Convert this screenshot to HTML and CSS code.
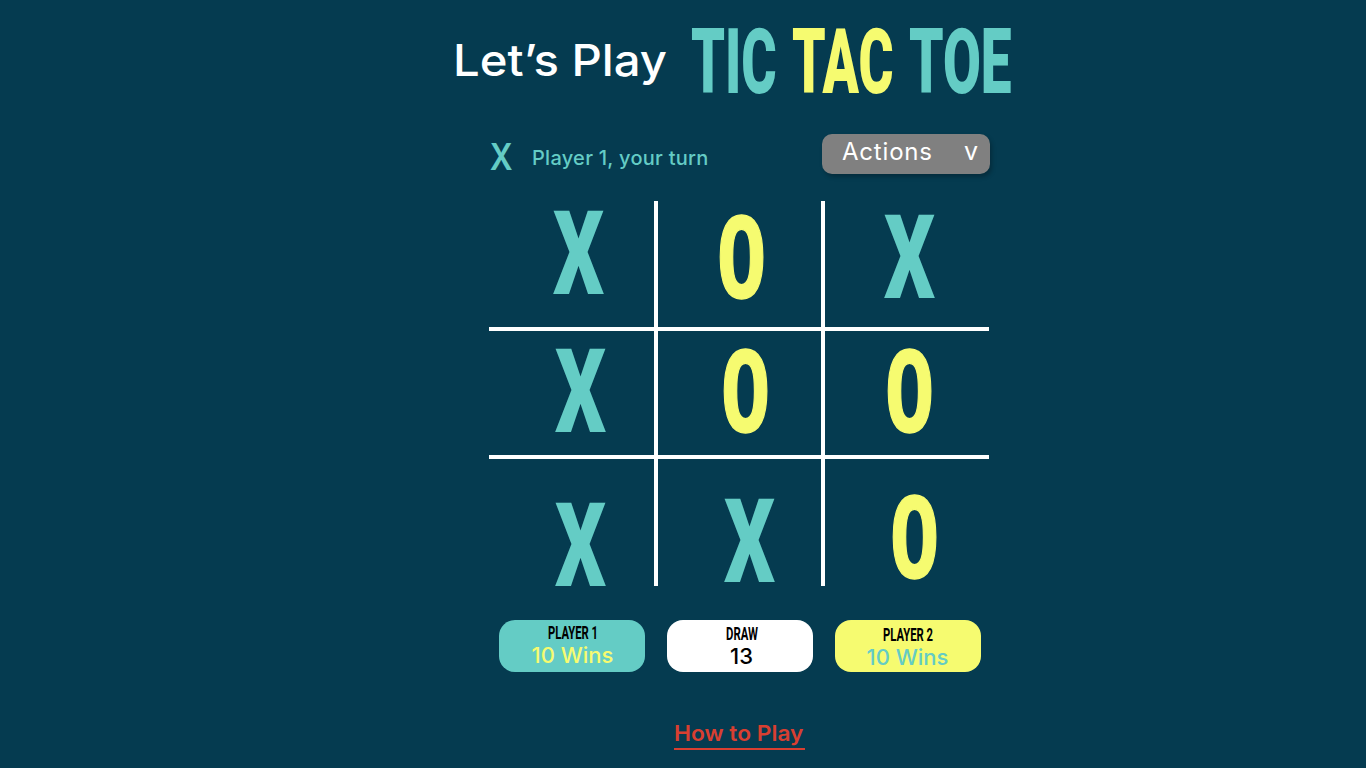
FILE: index.html
```html
<!DOCTYPE html>
<html lang="en">
<head>
<meta charset="utf-8">
<title>Tic Tac Toe</title>
<link rel="stylesheet" href="styles.css">
</head>
<body>
<header class="title">
  <span class="lets">Let’s Play</span>
  <div class="logo">
    <svg class="teal" width="85" height="80"><text transform="translate(0 73) scale(.6 1)" textLength="143" lengthAdjust="spacingAndGlyphs">TIC</text></svg>
    <svg class="yellow" width="101" height="80"><text transform="translate(0 73) scale(.57 1)" textLength="178" lengthAdjust="spacingAndGlyphs">TAC</text></svg>
    <svg class="teal" width="103" height="80"><text transform="translate(0 73) scale(.6 1)" textLength="171" lengthAdjust="spacingAndGlyphs">TOE</text></svg>
  </div>
</header>
<main class="game">
  <div class="status">
    <span class="turn-mark">X</span>
    <span class="turn">Player 1, your turn</span>
    <button class="actions"><span class="actions-label">Actions</span><span class="chev">v</span></button>
  </div>
  <div class="board">
    <div class="cell c1"><svg class="mark x"><text x="0" y="83" textLength="51" lengthAdjust="spacingAndGlyphs">X</text></svg></div>
    <div class="cell c2"><svg class="mark o"><text transform="translate(22.5 83) scale(.75 1)">O</text></svg></div>
    <div class="cell c3"><svg class="mark x"><text x="0" y="83" textLength="51" lengthAdjust="spacingAndGlyphs">X</text></svg></div>
    <div class="cell c4"><svg class="mark x"><text x="0" y="83" textLength="51" lengthAdjust="spacingAndGlyphs">X</text></svg></div>
    <div class="cell c5"><svg class="mark o"><text transform="translate(22.5 83) scale(.75 1)">O</text></svg></div>
    <div class="cell c6"><svg class="mark o"><text transform="translate(22.5 83) scale(.75 1)">O</text></svg></div>
    <div class="cell c7"><svg class="mark x"><text x="0" y="83" textLength="51" lengthAdjust="spacingAndGlyphs">X</text></svg></div>
    <div class="cell c8"><svg class="mark x"><text x="0" y="83" textLength="51" lengthAdjust="spacingAndGlyphs">X</text></svg></div>
    <div class="cell c9"><svg class="mark o"><text transform="translate(22.5 83) scale(.75 1)">O</text></svg></div>
  </div>
  <div class="scores">
    <div class="score p1">
      <svg class="name" width="50" height="16"><text x="0" y="14" textLength="50" lengthAdjust="spacingAndGlyphs">PLAYER 1</text></svg>
      <span class="count">10 Wins</span>
    </div>
    <div class="score draw">
      <svg class="name" width="32" height="16"><text x="0" y="14" textLength="32" lengthAdjust="spacingAndGlyphs">DRAW</text></svg>
      <span class="count">13</span>
    </div>
    <div class="score p2">
      <svg class="name" width="50" height="16"><text x="0" y="14" textLength="50" lengthAdjust="spacingAndGlyphs">PLAYER 2</text></svg>
      <span class="count">10 Wins</span>
    </div>
  </div>
  <a class="how"><span class="how-text">How to Play</span></a>
</main>
</body>
</html>
```
FILE: styles.css
```css
* { box-sizing: border-box; }
body {
  margin: 0;
  height: 768px;
  overflow: hidden;
  background: #053b50;
  font-family: Inter, "Liberation Sans", sans-serif;
}
svg { display: block; overflow: visible; flex: none; }
.title {
  display: flex;
  height: 134px;
  padding: 20px 0 0 453px;
}
.lets {
  width: 238px;
  padding-top: 14px;
  color: #fff;
  font-size: 43.5px;
  font-weight: 500;
  line-height: 52px;
  white-space: nowrap;
  transform: scaleX(1.087);
  transform-origin: left;
}
.logo {
  display: flex;
  gap: 16px;
  font: 900 90px Roboto, "Liberation Sans", sans-serif;
}
.teal { fill: #64ccc5; }
.yellow { fill: #f6fb70; }
.game {
  width: 501px;
  margin-left: 489px;
}
.status {
  display: flex;
  height: 67px;
  color: #64ccc5;
}
.turn-mark {
  width: 43px;
  padding: 2px 0 0 1px;
  font-size: 37px;
  font-weight: 600;
  line-height: 42px;
  transform: scaleX(.86);
  transform-origin: left;
}
.turn {
  width: 290px;
  padding-top: 12px;
  font-size: 20px;
  font-weight: 500;
  letter-spacing: .27px;
  line-height: 24px;
  white-space: nowrap;
}
.actions {
  display: flex;
  flex: none;
  justify-content: space-between;
  width: 168px;
  height: 40px;
  padding: 0 12px 0 20px;
  border: 0;
  border-radius: 10px;
  background: #808080;
  box-shadow: 2px 3px 4px rgba(0, 0, 0, .25);
  color: #fff;
  font-family: inherit;
}
.actions-label { font-size: 24px; letter-spacing: .8px; line-height: 36px; }
.chev { font-size: 25px; line-height: 34px; }
.board {
  display: grid;
  grid-template-columns: 165px 163px 164px;
  grid-template-rows: 126px 124px 127px;
  gap: 4px;
  width: 500px;
  height: 385px;
  background: #fff;
}
.cell { background: #053b50; }
.c1 { padding: 10px 0 0 64px; }
.c2 { padding: 13px 0 0 61px; }
.c3 { padding: 14px 0 0 59px; }
.c4 { padding: 18px 0 0 66px; }
.c5 { padding: 17px 0 0 65px; }
.c6 { padding: 17px 0 0 62px; }
.c7 { padding: 44px 0 0 66px; }
.c8 { padding: 40px 0 0 66px; }
.c9 { padding: 35px 0 0 67px; }
.mark { font: 900 116.7px Roboto, "Liberation Sans", sans-serif; }
.x { width: 51px; height: 83px; fill: #64ccc5; }
.o {
  width: 45px;
  height: 85px;
  font: bold 111px "DejaVu Sans Mono", monospace;
  text-anchor: middle;
  fill: #f6fb70;
  stroke: #f6fb70;
  stroke-width: 1.4px;
}
.scores {
  display: flex;
  gap: 22px;
  padding: 34px 0 0 10px;
}
.score {
  display: flex;
  flex-direction: column;
  align-items: center;
  width: 146px;
  height: 52px;
  border-radius: 16px;
}
.name {
  font: 700 18px Roboto, "Liberation Sans", sans-serif;
  fill: #000;
}
.count { font-size: 22px; font-weight: 500; line-height: 28px; }
.p1 { padding: 5px 0 0 1px; background: #64ccc5; color: #f6fb70; }
.draw { padding: 6px 0 0 3px; background: #fff; color: #000; }
.p2 { padding: 7px 1px 0 0; background: #f6fb70; color: #64ccc5; }
.how {
  display: block;
  width: 131px;
  height: 31px;
  margin: 47px 0 0 185px;
  border-bottom: 2px solid #d83f31;
  color: #d83f31;
  font-size: 22px;
  font-weight: 600;
  line-height: 28px;
  white-space: nowrap;
}
.how-text {
  display: inline-block;
  transform: scaleX(1.035);
  transform-origin: left;
}
```
